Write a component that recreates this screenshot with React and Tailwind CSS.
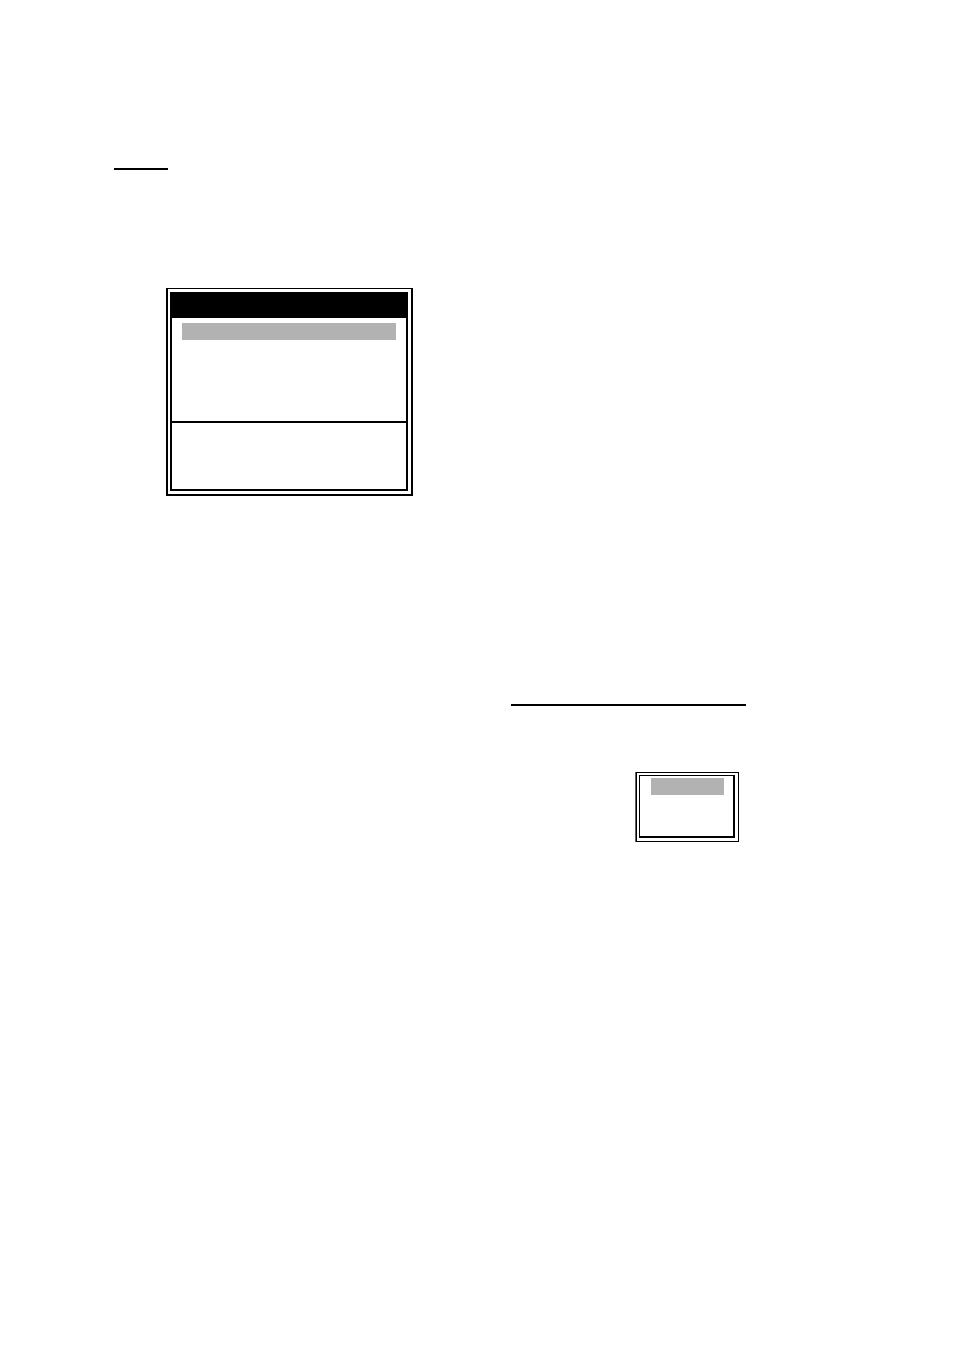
import React from 'react';

// Double-ruled window with a title bar, a highlighted row and a lower pane
const MenuWindow = () => (
  <section className="w-[247px] border-2 border-t border-black bg-white pt-[3px] pr-[3px] pb-[3px] pl-[2px]">
    <div className="border-2 border-t-0 border-black">
      <div className="h-[26px] bg-black" />
      <div className="h-[103px] px-[10px] pt-[5px]">
        <div className="h-[17px] bg-[#b2b2b2]" />
      </div>
      <div className="h-[68px] border-t-2 border-black" />
    </div>
  </section>
);

// Small double-ruled list with its first row selected
const OptionList = () => (
  <section className="w-[104px] border-l border-[#606060]">
    <div className="border border-black bg-white pt-[2px] pr-[3px] pb-[3px] pl-[2px]">
      <div className="h-[63px] border-t border-r-2 border-b-2 border-l border-black pt-[2px] pr-[9px] pl-[11px]">
        <div className="h-[17px] bg-[#b2b2b2]" />
      </div>
    </div>
  </section>
);

export default function App() {
  return (
    <main className="flex min-h-screen flex-col bg-white pt-[168px] pl-[114px]">
      <hr className="w-[54px] border-t-2 border-black" />
      <div className="mt-[118px] ml-[52px]">
        <MenuWindow />
      </div>
      <div className="mt-[208px] ml-[397px]">
        <hr className="w-[235px] border-t-2 border-black" />
        <div className="mt-[66px] ml-[124px]">
          <OptionList />
        </div>
      </div>
    </main>
  );
}
